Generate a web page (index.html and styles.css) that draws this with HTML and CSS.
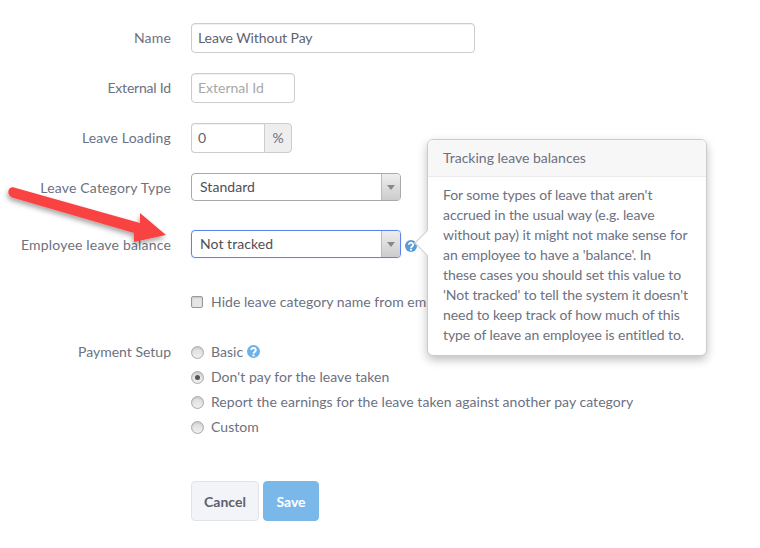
FILE: index.html
```html
<!DOCTYPE html>
<html lang="en">
<head>
<meta charset="utf-8">
<title>Leave Category</title>
<link rel="stylesheet" href="styles.css">
</head>
<body>
<main class="page">
  <form class="form">
    <div class="row row-name">
      <label class="label">Name</label>
      <div class="input input-name">Leave Without Pay</div>
    </div>
    <div class="row row-ext">
      <label class="label label-ext">External Id</label>
      <div class="input input-ext placeholder">External Id</div>
    </div>
    <div class="row row-load">
      <label class="label">Leave Loading</label>
      <div class="group">
        <div class="input input-load">0</div>
        <div class="addon">%</div>
      </div>
    </div>
    <div class="row row-cat">
      <label class="label label-low">Leave Category Type</label>
      <div class="select"><span class="select-value">Standard</span><span class="select-btn"><i class="caret"></i></span></div>
    </div>
    <div class="row row-bal">
      <label class="label label-low">Employee leave balance</label>
      <div class="select select-focus"><span class="select-value">Not tracked</span><span class="select-btn"><i class="caret"></i></span></div>
      <svg class="help help-bal" viewBox="0 0 12 12"><circle cx="6" cy="6" r="6" fill="#5b9bd5"/><path d="M3.9 4.7a2.1 2 0 1 1 3.2 1.7c-.8.5-1.1.8-1.1 1.5" fill="none" stroke="#fff" stroke-width="1.8"/><rect x="5" y="8.7" width="2" height="1.8" fill="#fff"/></svg>
    </div>
    <div class="row row-hide">
      <span class="box"></span>
      <span class="text">Hide leave category name from employees</span>
    </div>
    <div class="row row-pay">
      <label class="label label-pay">Payment Setup</label>
      <div class="radios">
        <div class="radio-row"><span class="radio"></span><span class="text">Basic</span><svg class="help help-basic" viewBox="0 0 12 12"><circle cx="6" cy="6" r="6" fill="#6cb2e8"/><path d="M3.9 4.7a2.1 2 0 1 1 3.2 1.7c-.8.5-1.1.8-1.1 1.5" fill="none" stroke="#fff" stroke-width="1.8"/><rect x="5" y="8.7" width="2" height="1.8" fill="#fff"/></svg></div>
        <div class="radio-row"><span class="radio radio-on"></span><span class="text">Don't pay for the leave taken</span></div>
        <div class="radio-row"><span class="radio"></span><span class="text">Report the earnings for the leave taken against another pay category</span></div>
        <div class="radio-row"><span class="radio"></span><span class="text">Custom</span></div>
      </div>
    </div>
    <div class="actions">
      <button type="button" class="btn btn-cancel">Cancel</button>
      <button type="button" class="btn btn-save">Save</button>
    </div>
  </form>

  <aside class="popover">
    <span class="popover-arrow"></span>
    <h3 class="popover-title">Tracking leave balances</h3>
    <p class="popover-body">For some types of leave that aren't<br>accrued in the usual way (e.g. leave<br>without pay) it might not make sense for<br>an employee to have a 'balance'. In<br>these cases you should set this value to<br>'Not tracked' to tell the system it doesn't<br>need to keep track of how much of this<br>type of leave an employee is entitled to.</p>
  </aside>

  <svg class="annotation" viewBox="0 0 180 84" width="180" height="84">
    <defs><filter id="sh" x="-10%" y="-30%" width="120%" height="170%"><feDropShadow dx="-1" dy="3" stdDeviation="2.5" flood-color="#000" flood-opacity=".35"/></filter></defs>
    <path filter="url(#sh)" d="M14 11.5 140 47 140 37 166 59 134 66 134 57 12 21.5C6 19 8 10 14 11.5Z" fill="#f94343"/>
  </svg>
</main>
</body>
</html>
```

FILE: styles.css
```css
* { box-sizing: border-box; }
html, body { margin: 0; background: #fff; }
body { font-family: Lato, "Open Sans", sans-serif; font-size: 14px; color: #5f6370; }
.page { position: relative; width: 760px; height: 548px; overflow: hidden; padding-top: 23px; }
.form { display: flex; flex-direction: column; }
.row { display: flex; align-items: center; padding-left: 191px; position: relative; }
.label { position: absolute; left: 0; width: 171px; text-align: right; letter-spacing: .18px; line-height: 20px; top: 50%; margin-top: -10px; color: #6d7180; }
.label-low { margin-top: -9px; }
.label-ext { letter-spacing: -.2px; }
.label-pay { letter-spacing: 0; }
.input { height: 30px; border: 1px solid #ccc; border-radius: 4px; padding: 0 6px; line-height: 28px; box-shadow: inset 0 1px 1px rgba(0,0,0,.06); }
.row-ext { margin-top: 20px; }
.row-load { margin-top: 20px; }
.row-cat { margin-top: 20px; }
.row-bal { margin-top: 29px; }
.row-hide { margin-top: 34px; height: 20px; }
.row-pay { margin-top: 30px; align-items: flex-start; }
.row-pay .label { top: 0; margin-top: 0; }
.input-name { width: 284px; color: #5f6370; letter-spacing: -.08px; }
.input-ext { width: 104px; }
.placeholder { color: #a8a8a8; }
.group { display: flex; }
.input-load { width: 73px; border-radius: 4px 0 0 4px; border-right: 0; }
.addon { width: 28px; height: 30px; border: 1px solid #ccc; border-radius: 0 4px 4px 0; background: #eee; text-align: center; line-height: 28px; color: #6d7180; }
.select { width: 210px; height: 28px; border: 1px solid #aaa; border-radius: 4px; display: flex; align-items: center; justify-content: space-between; overflow: hidden; color: #4d4f58; }
.select-focus { border-color: #5e83f0; box-shadow: 0 0 1px rgba(94,131,240,.6); }
.select-value { padding-left: 8px; letter-spacing: .05px; margin-top: -2px; }
.select-btn { width: 19px; height: 100%; border-left: 1px solid #bbb; background: linear-gradient(#eee, #ccc); display: flex; align-items: center; justify-content: center; }
.caret { width: 0; height: 0; border: 4px solid transparent; border-top: 5px solid #888; border-bottom: 0; }
.help { width: 12px; height: 12px; margin-left: 4px; flex: none; }
.help-bal { margin-top: 4px; }
.help-basic { width: 13px; height: 13px; margin-top: -1px; }
.box { width: 12px; height: 12px; border: 1px solid #999; border-radius: 2px; background: #e6e6e6; box-shadow: inset 0 1px 2px rgba(0,0,0,.15); flex: none; }
.text { letter-spacing: .05px; line-height: 20px; margin-left: 7px; color: #6d7180; }
.row-hide .text { margin-left: 8px; }
.radios { display: flex; flex-direction: column; gap: 5px; }
.radio-row { display: flex; align-items: center; height: 20px; }
.radio { width: 13px; height: 13px; border: 1px solid #aaa; border-radius: 50%; background: linear-gradient(#dcdcdc, #efefef); box-shadow: inset 0 1px 2px rgba(0,0,0,.12); flex: none; display: flex; align-items: center; justify-content: center; }
.radio-on::after { content: ""; width: 5px; height: 5px; border-radius: 50%; background: #555; }
.actions { display: flex; gap: 4px; padding-left: 191px; margin-top: 44px; }
.btn { height: 40px; border-radius: 4px; font: 700 14px Lato, sans-serif; padding: 0; }
.btn-cancel { width: 68px; background: #f3f4f8; border: 1px solid #e2e3e8; color: #5c5f6a; }
.btn-save { width: 56px; background: #7ab8ea; border: 1px solid #7ab8ea; color: #fff; }
.popover { position: absolute; left: 427px; top: 139px; width: 280px; height: 217px; background: #fff; border: 1px solid #ccc; border-radius: 6px; box-shadow: 0 4px 10px rgba(0,0,0,.25); }
.popover-title { margin: 0; height: 37px; background: #f7f7f7; border-bottom: 1px solid #ebebeb; border-radius: 5px 5px 0 0; padding: 0 15px; font-weight: 400; font-size: 14px; line-height: 36px; color: #6d7180; }
.popover-body { margin: 0; padding: 8px 15px; line-height: 20px; letter-spacing: -.07px; color: #6d7180; white-space: nowrap; }
.popover-arrow { position: absolute; left: -11px; top: 93px; width: 20px; height: 20px; background: #fff; border: 1px solid #ccc; border-width: 0 0 1px 1px; transform: rotate(45deg) scale(.9); }
.annotation { position: absolute; left: 0; top: 176px; }
```
